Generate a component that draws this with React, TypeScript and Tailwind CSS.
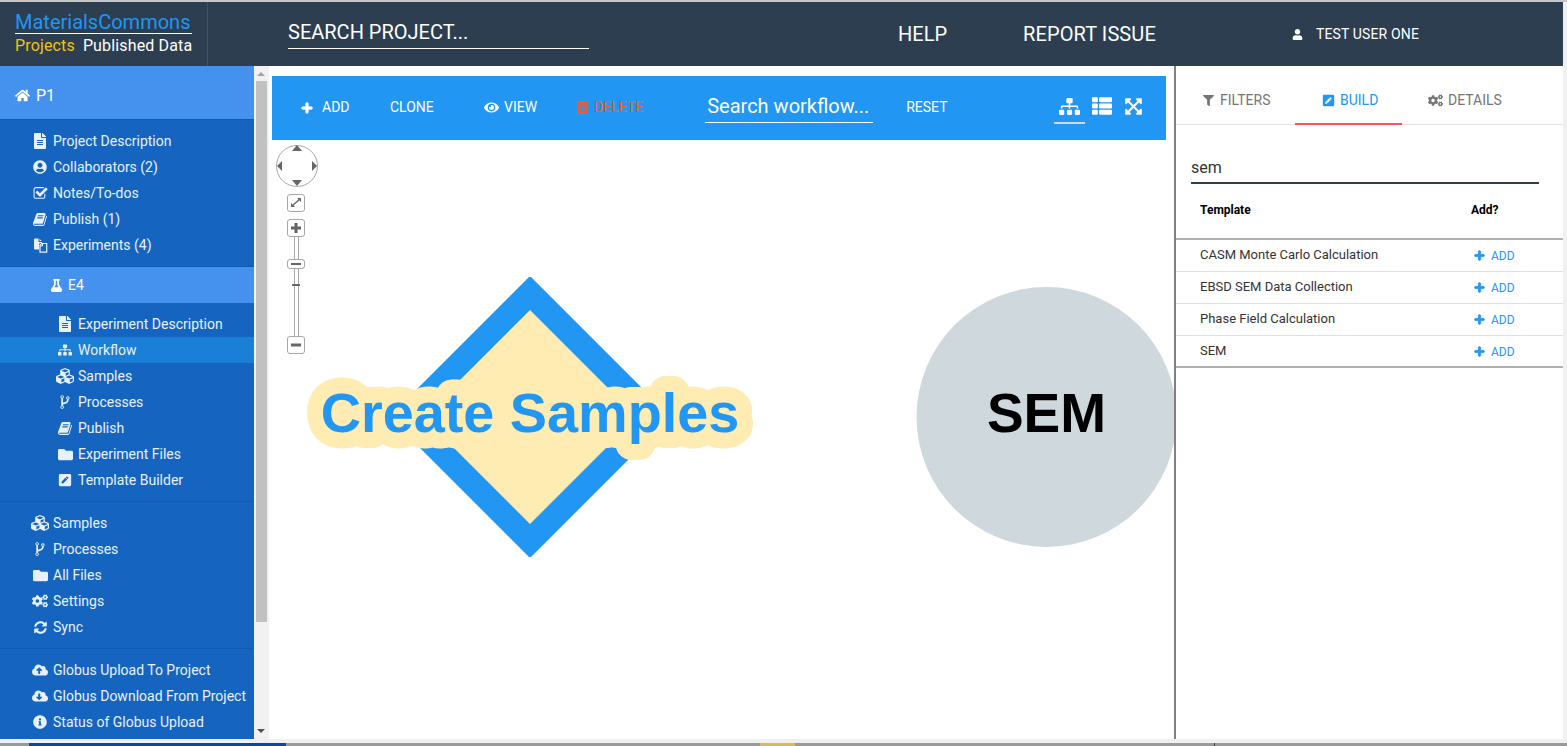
import React from "react";
import {
  FaHome, FaFileAlt, FaUserCircle, FaFlask, FaSitemap, FaCubes,
  FaFolder, FaPenSquare, FaCogs, FaSyncAlt, FaCloudUploadAlt, FaCloudDownloadAlt,
  FaInfoCircle, FaPlus, FaEye, FaTrashAlt, FaThList, FaExpandArrowsAlt, FaFilter, FaUser,
} from "react-icons/fa";

type IconP = { className?: string };

const Fa4 = ({ d, className }: { d: string; className?: string }) => (
  <svg viewBox="0 0 1792 1792" fill="currentColor" width="1em" height="1em" className={className}><path d={d} /></svg>
);
const BookIcon = (p: IconP) => (
  <Fa4 {...p} d="M1639 478q40 57 18 129l-275 906q-19 64-76.5 107.5t-122.5 43.5h-923q-77 0-148.5-53.5t-99.5-131.5q-24-67-2-127 0-4 3-27t4-37q1-8-3-21.5t-3-19.5q2-11 8-21t16.5-23.5 16.5-23.5q23-38 45-91.5t30-91.5q3-10 .5-30t-.5-28q3-11 17-28t17-23q21-36 42-92t25-90q1-9-2.5-32t.5-28q4-13 22-30.5t22-22.5q19-26 42.5-84.5t27.5-96.5q1-8-3-25.5t-2-26.5q2-8 9-18t18-23 17-21q8-12 16.5-30.5t15-35 16-36 19.5-32 26.5-23.5 36-11.5 47.5 5.5l-1 3q38-9 51-9h761q74 0 114 56t18 130l-274 906q-36 119-71.5 153.5t-128.5 34.5h-869q-27 0-38 15-11 16-1 43 24 70 144 70h923q29 0 56-15.5t35-41.5l300-987q7-22 5-57 38 15 59 43zm-1064 2q-4 13 2 22.5t20 9.5h608q13 0 25.5-9.5t16.5-22.5l21-64q4-13-2-22.5t-20-9.5h-608q-13 0-25.5 9.5t-16.5 22.5zm-83 256q-4 13 2 22.5t20 9.5h608q13 0 25.5-9.5t16.5-22.5l21-64q4-13-2-22.5t-20-9.5h-608q-13 0-25.5 9.5t-16.5 22.5z" />
);
const ForkIcon = (p: IconP) => (
  <Fa4 {...p} d="M672 1472q0-40-28-68t-68-28-68 28-28 68 28 68 68 28 68-28 28-68zm0-1152q0-40-28-68t-68-28-68 28-28 68 28 68 68 28 68-28 28-68zm640 128q0-40-28-68t-68-28-68 28-28 68 28 68 68 28 68-28 28-68zm96 0q0 52-26 96.5t-70 69.5q-2 287-226 414-67 38-203 81-128 40-169.5 71t-41.5 100v26q44 25 70 69.5t26 96.5q0 80-56 136t-136 56-136-56-56-136q0-52 26-96.5t70-69.5v-820q-44-25-70-69.5t-26-96.5q0-80 56-136t136-56 136 56 56 136q0 52-26 96.5t-70 69.5v497q54-26 154-57 55-17 87.5-29.5t70.5-31 59-39.5 40.5-51 28-69.5 8.5-91.5q-44-25-70-69.5t-26-96.5q0-80 56-136t136-56 136 56 56 136z" />
);
const CheckIcon = (p: IconP) => (
  <Fa4 {...p} d="M1472 930v318q0 119-84.5 203.5t-203.5 84.5h-832q-119 0-203.5-84.5t-84.5-203.5v-832q0-119 84.5-203.5t203.5-84.5h832q63 0 117 25 15 7 18 23 3 17-9 29l-49 49q-10 10-23 10-3 0-9-2-23-6-45-6h-832q-66 0-113 47t-47 113v832q0 66 47 113t113 47h832q66 0 113-47t47-113v-254q0-13 9-22l64-64q10-10 23-10 6 0 12 3 20 8 20 29zm231-489l-814 814q-24 24-57 24t-57-24l-430-430q-24-24-24-57t24-57l110-110q24-24 57-24t57 24l263 263 647-647q24-24 57-24t57 24l110 110q24 24 24 57t-24 57z" />
);
const FilesIcon = ({ className }: IconP) => (
  <svg viewBox="0 0 14 15" width="1em" height="1em" className={className}>
    <path d="M0.5 1.5a1 1 0 0 1 1-1H5V4h3.5v1H6.5L5.5 6v5.5h-4a1 1 0 0 1-1-1z" fill="currentColor" />
    <path d="M6 0.8L8.2 3H6z" fill="currentColor" />
    <path d="M6.5 7.2L8.2 5.5H13.2V14.2H6.5z" fill="none" stroke="currentColor" strokeWidth="1.2" />
    <path d="M9 5.5V8H6.5" fill="none" stroke="currentColor" strokeWidth="1" />
  </svg>
);

type Item = { icon: React.ComponentType<IconP>; label: string; active?: boolean; size?: string };

const top: Item[] = [
  { icon: FaFileAlt, label: "Project Description", size: "text-[16px]" },
  { icon: FaUserCircle, label: "Collaborators (2)", size: "text-[14px]" },
  { icon: CheckIcon, label: "Notes/To-dos", size: "text-[15px]" },
  { icon: BookIcon, label: "Publish (1)", size: "text-[15px]" },
  { icon: FilesIcon, label: "Experiments (4)", size: "text-[15px]" },
];
const exp: Item[] = [
  { icon: FaFileAlt, label: "Experiment Description", size: "text-[16px]" },
  { icon: FaSitemap, label: "Workflow", active: true, size: "text-[14px]" },
  { icon: FaCubes, label: "Samples", size: "text-[18px]" },
  { icon: ForkIcon, label: "Processes", size: "text-[16px]" },
  { icon: BookIcon, label: "Publish", size: "text-[15px]" },
  { icon: FaFolder, label: "Experiment Files", size: "text-[15px]" },
  { icon: FaPenSquare, label: "Template Builder", size: "text-[14px]" },
];
const proj: Item[] = [
  { icon: FaCubes, label: "Samples", size: "text-[18px]" },
  { icon: ForkIcon, label: "Processes", size: "text-[16px]" },
  { icon: FaFolder, label: "All Files", size: "text-[15px]" },
  { icon: FaCogs, label: "Settings", size: "text-[16px]" },
  { icon: FaSyncAlt, label: "Sync", size: "text-[13px]" },
];
const globus: Item[] = [
  { icon: FaCloudUploadAlt, label: "Globus Upload To Project", size: "text-[16px]" },
  { icon: FaCloudDownloadAlt, label: "Globus Download From Project", size: "text-[16px]" },
  { icon: FaInfoCircle, label: "Status of Globus Upload", size: "text-[14px]" },
];

function NavRow({ item, sub }: { item: Item; sub?: boolean }) {
  const Icon = item.icon;
  return (
    <div className={`flex h-[26px] items-center ${sub ? "pl-[57px]" : "pl-[32px]"} ${item.active ? "bg-[#1a7fd6]" : ""}`}>
      <span className="flex w-[16px] justify-center mr-[5px]">
        <Icon className={`${item.size} shrink-0`} />
      </span>
      <span className="whitespace-nowrap">{item.label}</span>
    </div>
  );
}

function Sidebar() {
  return (
    <aside className="w-[254px] shrink-0 bg-[#1565c0] text-[14px] text-[#e8f1fb] overflow-hidden">
      <div className="flex h-[54px] items-center pl-[15px] pt-[6px] bg-[#4492ee] border-b border-[#0f5bb0] text-white">
        <FaHome className="text-[15px] mr-[6px]" />
        <span className="text-[16px]">P1</span>
      </div>
      <div className="pt-[8px] pb-[8px]">
        {top.map((i) => <NavRow key={i.label} item={i} />)}
      </div>
      <div className="flex h-[37px] items-center pl-[50px] bg-[#4492ee] border-t border-[#0f5bb0] text-white">
        <FaFlask className="text-[13px] mr-[5px]" />
        <span>E4</span>
      </div>
      <div className="pt-[8px] pb-[8px] border-b border-[#0f5bb0]">
        {exp.map((i) => <NavRow key={i.label} item={i} sub />)}
      </div>
      <div className="pt-[8px] pb-[8px] border-b border-[#0f5bb0]">
        {proj.map((i) => <NavRow key={i.label} item={i} />)}
      </div>
      <div className="pt-[8px]">
        {globus.map((i) => <NavRow key={i.label} item={i} />)}
      </div>
    </aside>
  );
}

function Scrollbar() {
  return (
    <div className="w-[15px] shrink-0 bg-[#f1f1f1] flex flex-col items-center pr-[1px]">
      <div className="h-[15px] flex items-center justify-center">
        <div className="w-0 h-0 border-x-[4px] border-x-transparent border-b-[4px] border-b-[#a3a3a3]" />
      </div>
      <div className="w-[11px] h-[541px] bg-[#c1c1c1]" />
      <div className="flex-1 flex items-end justify-center pb-[6px]">
        <div className="w-0 h-0 border-x-[4px] border-x-transparent border-t-[4px] border-t-[#505050]" />
      </div>
    </div>
  );
}

function Toolbar() {
  return (
    <div className="flex h-[64px] w-[894px] items-center bg-[#2196f3] text-[14px] text-white pl-[29px] pb-[1px]">
      <FaPlus className="text-[12px] mr-[9px] [stroke-width:40px]" />
      <span className="w-[68px]">ADD</span>
      <span className="w-[75px] ml-0">CLONE</span>
      <span className="ml-[19px] flex items-center"><FaEye className="text-[15px] mr-[5px]" />VIEW</span>
      <span className="ml-[39px] flex items-center text-[#ff5722]"><FaTrashAlt className="text-[13px] mr-[5px]" />DELETE</span>
      <div className="ml-[62px] w-[168px] border-b border-white pl-[2px] h-[30px] text-[20px] leading-[26px] whitespace-nowrap">Search workflow...</div>
      <span className="ml-[33px]">RESET</span>
      <div className="ml-[106px] flex h-[32px] w-[31px] justify-center items-center border-b-2 border-[#d5d5d5] text-[21px]"><FaSitemap /></div>
      <FaThList className="ml-[7px] text-[20px] -mt-[3px]" />
      <FaExpandArrowsAlt className="ml-[12px] text-[19px] -mt-[3px]" />
    </div>
  );
}

function Canvas() {
  const g = "#666666";
  const btn = "#a8a8a8";
  return (
    <div className="relative flex-1 overflow-hidden">
      <svg className="absolute left-0 top-0" width="906" height="600" viewBox="269 140 906 600">
        <polygon points="529,277 531,277 670,416 670,418 531,557 529,557 390,418 390,416" fill="#2196f3" />
        <polygon points="530,310 637,417 530,524 423,417" fill="#ffecb3" />
        <circle cx="1046.5" cy="417" r="130" fill="#cfd8dc" />
        <text x="530" y="432" textAnchor="middle" fontFamily="'Liberation Sans', sans-serif" fontWeight="700" fontSize="55.8" fill="#2196f3" stroke="#ffecb3" strokeWidth="32" strokeLinejoin="round" paintOrder="stroke">Create Samples</text>
        <text x="1046.5" y="432" textAnchor="middle" fontFamily="'Liberation Sans', sans-serif" fontWeight="700" fontSize="55" fill="#000000">SEM</text>

        <circle cx="297" cy="166" r="20.5" fill="#fff" stroke={btn} />
        <polygon points="297,145 302,151 292,151" fill={g} />
        <polygon points="297,186 302,180 292,180" fill={g} />
        <polygon points="277,166 282,161 282,171" fill={g} />
        <polygon points="317,166 312,161 312,171" fill={g} />

        <rect x="287.5" y="194.5" width="17" height="17" rx="2.5" fill="#fff" stroke={btn} />
        <path d="M292 206 L300 199" stroke={g} strokeWidth="1.4" />
        <polygon points="291,207 291,203 295,207" fill={g} />
        <polygon points="301,198 301,202 297,198" fill={g} />

        <rect x="287.5" y="219.5" width="17" height="17" rx="2.5" fill="#fff" stroke={btn} />
        <rect x="291" y="226.5" width="10" height="3" fill={g} />
        <rect x="294.5" y="223" width="3" height="10" fill={g} />

        <rect x="294" y="237" width="1" height="99" fill={btn} />
        <rect x="298" y="237" width="1" height="99" fill={btn} />
        <rect x="292" y="284" width="8" height="2" fill={g} />

        <rect x="287.5" y="259.5" width="17" height="9" rx="2.5" fill="#fff" stroke={btn} />
        <rect x="291" y="263" width="10" height="2" fill={g} />

        <rect x="287.5" y="336.5" width="17" height="17" rx="2.5" fill="#fff" stroke={btn} />
        <rect x="291" y="343.5" width="10" height="3" fill={g} />
      </svg>
    </div>
  );
}

const templates = ["CASM Monte Carlo Calculation", "EBSD SEM Data Collection", "Phase Field Calculation", "SEM"];

function RightPanel() {
  return (
    <section className="w-[387px] shrink-0 flex flex-col bg-white">
      <div className="mt-[10px] h-[49px] flex items-stretch border-b border-[#e0e0e0] text-[14px] text-[#757575]">
        <div className="w-[119px] flex items-center pl-[27px]">
          <FaFilter className="text-[11px] mr-[6px]" />FILTERS
        </div>
        <div className="w-[107px] flex items-center pl-[27px] pt-[2px] text-[#2196f3] border-b-2 border-[#ff5252] h-[49px]">
          <FaPenSquare className="text-[13px] mr-[5px]" />BUILD
        </div>
        <div className="flex items-center pl-[26px]">
          <FaCogs className="text-[15px] mr-[5px]" />DETAILS
        </div>
      </div>
      <div className="ml-[15px] mt-[32px] w-[348px] h-[27px] border-b-2 border-[#2c3e50] text-[16px] text-[#333] leading-[22px]">sem</div>
      <div className="flex h-[56px] border-b-2 border-[#b0b0b0] text-[12px] font-bold text-black pt-[17px]">
        <span className="ml-[24px] w-[271px]">Template</span>
        <span>Add?</span>
      </div>
      {templates.map((t, i) => (
        <div key={t} className={`flex h-[32px] items-center text-[13px] text-[#333] ${i === 3 ? "border-b-2 border-[#b0b0b0]" : "border-b border-[#e0e0e0]"}`}>
          <span className={`ml-[24px] w-[274px] ${i === 3 ? "" : "pb-[2px]"}`}>{t}</span>
          <span className={`flex items-center text-[12px] text-[#2196f3] ${i === 3 ? "pt-[1px]" : ""}`}><FaPlus className="text-[11px] mr-[6px] [stroke-width:40px]" />ADD</span>
        </div>
      ))}
    </section>
  );
}

export default function App() {
  return (
    <div className="relative flex h-[746px] w-[1567px] flex-col overflow-hidden bg-[#f0f0f0] font-['Roboto',sans-serif]">
      <div className="h-[2px] bg-[#c8c8c8] shrink-0" />
      <header className="flex h-[64px] w-[1563px] shrink-0 items-center bg-[#2c3e50] text-white">
        <div className="w-[208px] h-full border-r border-[#46535f] pl-[15px] pt-[9px]">
          <div className="w-[177px] border-b border-white text-[20px] leading-[22px] h-[23px] text-[#2196f3] whitespace-nowrap">MaterialsCommons</div>
          <div className="flex text-[16px] leading-[22px] mt-[1px] whitespace-nowrap tracking-[0.15px]">
            <span className="text-[#f1c40f]">Projects</span>
            <span className="ml-[8px]">Published Data</span>
          </div>
        </div>
        <div className="ml-[80px] w-[301px] h-[30px] border-b border-white text-[20px] leading-[26px] -mt-[1px]">SEARCH PROJECT...</div>
        <span className="ml-[309px] text-[20px] -mt-[1px]">HELP</span>
        <span className="ml-[76px] text-[20px] -mt-[1px] tracking-[0.1px]">REPORT ISSUE</span>
        <FaUser className="ml-[136px] text-[11px]" />
        <span className="ml-[13px] text-[14px] tracking-[0.15px]">TEST USER ONE</span>
      </header>
      <main className="flex h-[673px] w-[1563px] shrink-0 bg-white">
        <Sidebar />
        <Scrollbar />
        <div className="w-[905px] shrink-0 flex flex-col pt-[10px]">
          <div className="pl-[3px]"><Toolbar /></div>
          <Canvas />
        </div>
        <div className="w-[2px] shrink-0 bg-[#808080]" />
        <RightPanel />
      </main>
      <div className="h-[4px] shrink-0 bg-[#f0f0f0]" />
      <div className="flex flex-1 bg-[#9a9a9a]">
        <div className="ml-[29px] w-[257px] bg-[#0d47a1]" />
        <div className="ml-[474px] w-[35px] bg-[#d9b95a]" />
        <div className="ml-[419px] w-px bg-[#444]" />
      </div>
    </div>
  );
}
